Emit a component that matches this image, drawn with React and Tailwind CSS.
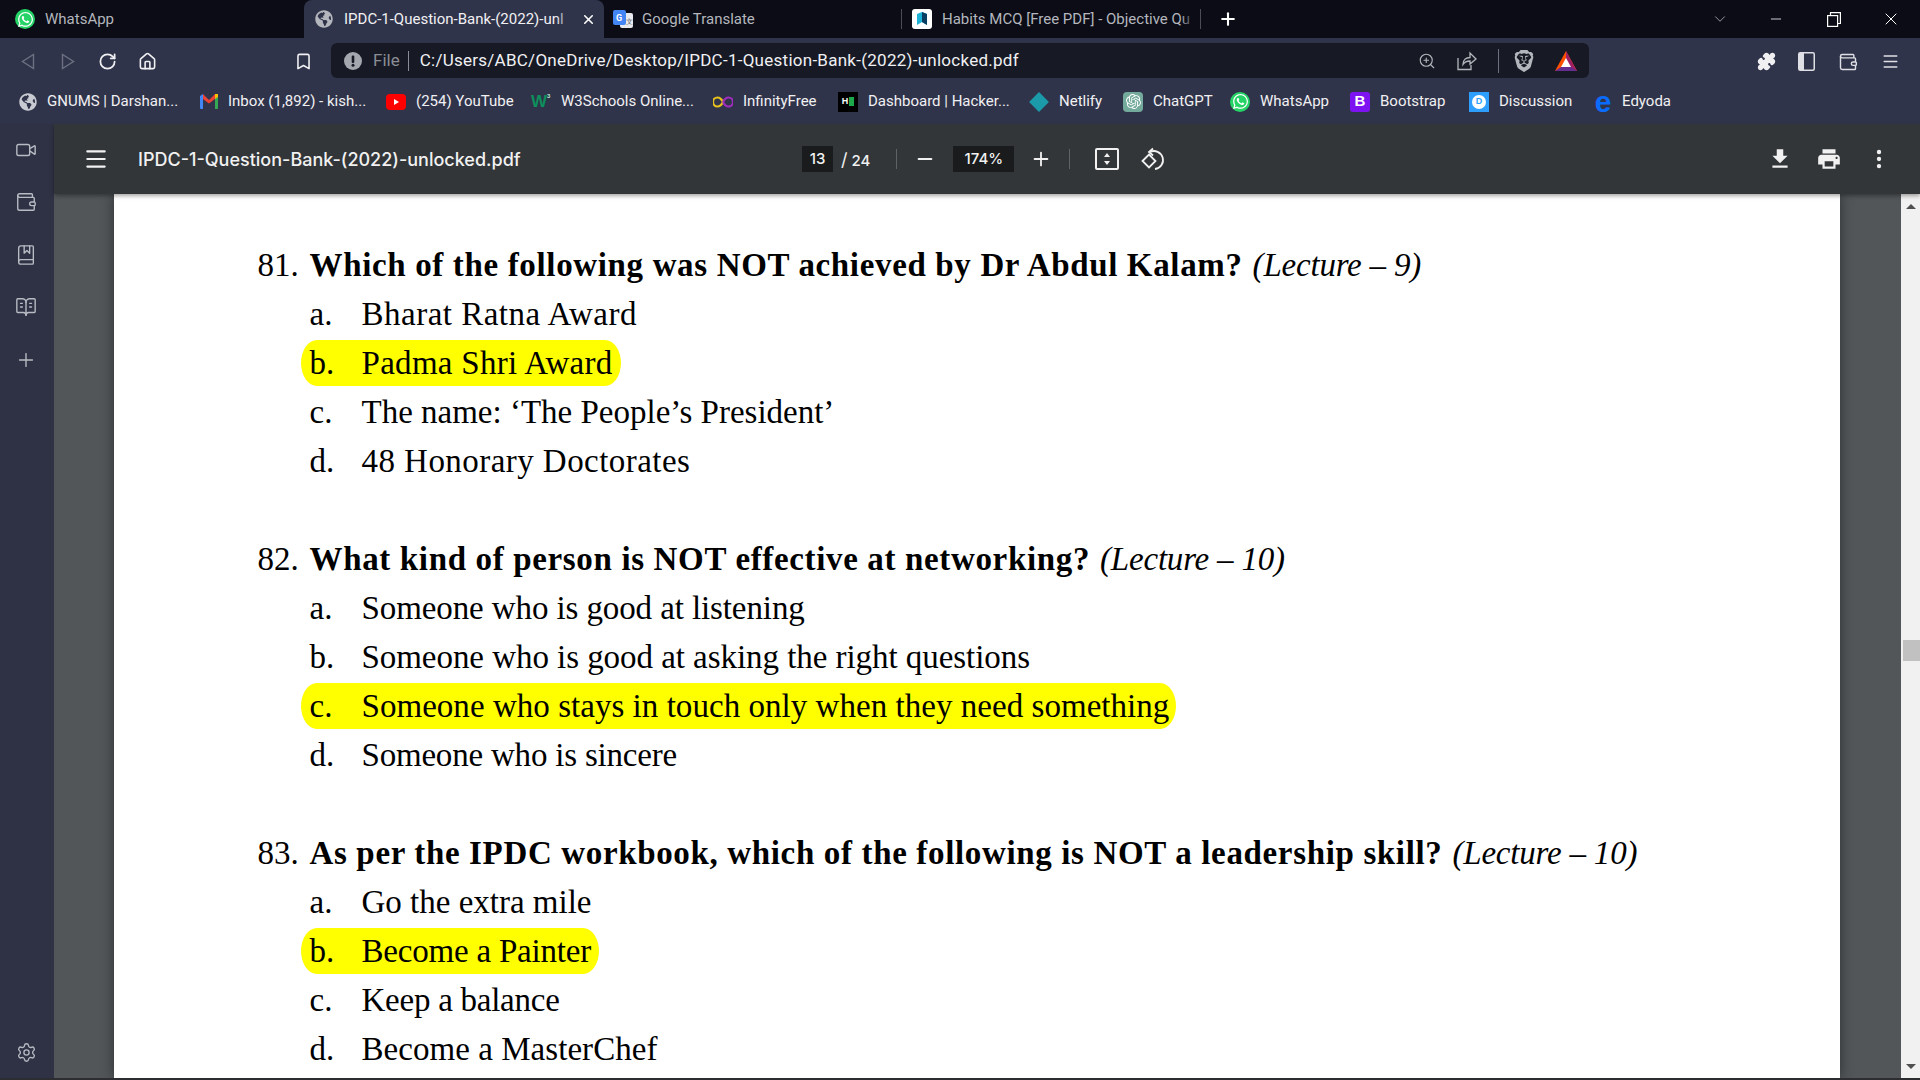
import {
  Bookmark, ChevronDown, Home, Menu, Minus, Plus, Puzzle, RotateCw, Settings, Video, Wallet, X, ZoomIn, BookMarked, BookOpenText,
} from "lucide-react";
import { FaGlobeAmericas, FaWhatsapp } from "react-icons/fa";
import { SiBrave, SiOpenai } from "react-icons/si";

const ui = "font-['Roboto',sans-serif]";

const WhatsAppIcon = ({ size = 20 }) => (
  <span className="flex shrink-0 items-center justify-center rounded-full bg-[#25d366] text-white" style={{ width: size, height: size }}>
    <FaWhatsapp size={size - 3} />
  </span>
);

const Translate = () => (
  <svg width="20" height="20" viewBox="0 0 20 20" className="shrink-0">
    <rect x="7" y="4" width="13" height="15" rx="2" fill="#e8eaed" />
    <rect x="0" y="1" width="13" height="15" rx="2" fill="#4285f4" />
    <text x="3" y="12" fontSize="9" fill="#fff" fontFamily="Roboto" fontWeight="700">G</text>
    <text x="13" y="15" fontSize="7" fill="#5f6368" fontFamily="Roboto">文</text>
  </svg>
);

const Testbook = () => (
  <svg width="20" height="20" viewBox="0 0 20 20" className="shrink-0">
    <rect width="20" height="20" rx="3" fill="#fff" />
    <path d="M5 5 L10 3 L15 5 V16 L10 13 L5 16 Z" fill="#1eb2d6" />
    <path d="M10 3 L15 5 V16 L10 13 Z" fill="#0a3d62" />
  </svg>
);

const Gmail = () => (
  <svg width="18" height="17" viewBox="0 0 18 17" className="shrink-0">
    <path d="M0 3 L3 1 V16 H1 Q0 16 0 15 Z" fill="#4285f4" />
    <path d="M18 3 L15 1 V16 H17 Q18 16 18 15 Z" fill="#34a853" />
    <path d="M3 1 L9 7 L15 1 V6 L9 10.5 L3 6 Z" fill="#ea4335" />
    <path d="M15 1 L18 1 V4 L15 6 Z" fill="#fbbc04" />
  </svg>
);

const YouTube = () => (
  <svg width="20" height="16" viewBox="0 0 20 16" className="shrink-0">
    <rect width="20" height="16" rx="4" fill="#ff0000" />
    <path d="M8 5 L13 8 L8 11 Z" fill="#fff" />
  </svg>
);

const W3 = () => (
  <span className="flex w-5 shrink-0 items-start font-['Liberation_Sans',sans-serif] text-[17px] leading-none font-bold text-[#0c8f5c]">
    W<span className="text-[6px] text-[#bfe8d6]">3</span>
  </span>
);

const InfinityIcon = () => (
  <svg width="20" height="12" viewBox="0 0 20 12" fill="none" strokeWidth="2.2" className="shrink-0">
    <path d="M10 6 C8 2 6 1.500 4.500 1.500 A4.500 4.500 0 0 0 4.500 10.500 C6 10.500 8 10 10 6" stroke="#e8c21c" />
    <path d="M10 6 C12 2 14 1.500 15.500 1.500 A4.500 4.500 0 0 1 15.500 10.500 C14 10.500 12 10 10 6" stroke="#a02cc0" />
  </svg>
);

const HackerRank = () => (
  <span className="flex h-5 w-5 shrink-0 items-center justify-center gap-[1px] bg-black">
    <span className="font-['Liberation_Sans',sans-serif] text-[9px] font-bold text-white">H</span>
    <span className="h-[9px] w-[5px] bg-[#1ba94c]" />
  </span>
);

const Netlify = () => (
  <span className="flex h-5 w-5 shrink-0 items-center justify-center">
    <span className="h-[14px] w-[14px] rotate-45 bg-[#1b9aaa]" />
  </span>
);

const ChatGpt = () => (
  <span className="flex h-5 w-5 shrink-0 items-center justify-center rounded-[4px] bg-[#74aa9c] text-white">
    <SiOpenai size={15} />
  </span>
);

const BootstrapIcon = () => (
  <span className="flex h-5 w-5 shrink-0 items-center justify-center rounded-[3px] bg-[#7e13f2] font-['Liberation_Sans',sans-serif] text-[15px] font-bold text-white">
    B
  </span>
);

const Disqus = () => (
  <span className="flex h-5 w-5 shrink-0 items-center justify-center bg-[#2e9fff]">
    <span className="flex h-[14px] w-[14px] items-center justify-center rounded-full bg-white font-['Liberation_Sans',sans-serif] text-[9px] font-bold text-[#2e9fff]">D</span>
  </span>
);

const Edyoda = () => (
  <span className="w-[18px] shrink-0 text-center font-['Liberation_Sans',sans-serif] text-[30px] leading-[18px] font-bold text-[#0a6cff]">e</span>
);

const Bat = () => (
  <svg width="22" height="20" viewBox="0 0 22 20">
    <path d="M11 0 L22 20 H0 Z" fill="#ff5000" />
    <path d="M11 0 L22 20 H15 L11 12 Z" fill="#9e1f63" />
    <path d="M0 20 L6 16 H16 L22 20 Z" fill="#662d91" />
    <path d="M11 7 L16 16 H6 Z" fill="#fff" />
  </svg>
);

const NavTriangle = ({ flip }) => (
  <svg width="14" height="17" viewBox="0 0 14 17" fill="none" stroke="#6d7080" strokeWidth="1.4" className={flip ? "-scale-x-100" : ""}>
    <path d="M12.500 1.500 V15.500 L1.500 8.500 Z" />
  </svg>
);

const InfoFilled = () => (
  <svg width="18" height="18" viewBox="0 0 18 18" className="ml-[13px] shrink-0">
    <circle cx="9" cy="9" r="9" fill="#a5a7af" />
    <rect x="7.700" y="3.500" width="2.600" height="7.500" rx="1" fill="#171a24" />
    <circle cx="9" cy="13.300" r="1.500" fill="#171a24" />
  </svg>
);

const ShareOut = () => (
  <svg width="20" height="20" viewBox="0 0 20 20" fill="none" stroke="#b4b6bd" strokeWidth="1.300" className="ml-[21px] shrink-0">
    <path d="M1 7 V18.500 H14 V14" />
    <path d="M6 13.500 C6 9 9 6.500 13 6.500 V2 L19 8 L13 13 V10 C10 10 7.500 11 6 13.500 Z" />
  </svg>
);

const RestoreIcon = () => (
  <svg width="14" height="15" viewBox="0 0 14 15" fill="none" stroke="#fff" strokeWidth="1.200" className="ml-[43px] shrink-0">
    <rect x="0.600" y="3.600" width="10" height="10.800" />
    <path d="M3.500 3.500 V0.600 H13.400 V11.500 H10.500" />
  </svg>
);

const SidePanelIcon = () => (
  <svg width="17" height="19" viewBox="0 0 17 19" className="ml-[22px] shrink-0">
    <rect x="0.750" y="0.750" width="15.500" height="17.500" rx="1.500" fill="none" stroke="#dfe0e5" strokeWidth="1.500" />
    <rect x="1" y="1" width="5" height="17" fill="#dfe0e5" />
  </svg>
);

const bookmarks = [
  { label: "GNUMS | Darshan...", w: "w-[181px]", icon: <FaGlobeAmericas size={18} className="shrink-0 text-[#c9cbd3]" /> },
  { label: "Inbox (1,892) - kish...", w: "w-[186px]", icon: <Gmail /> },
  { label: "(254) YouTube", w: "w-[145px]", icon: <YouTube /> },
  { label: "W3Schools Online...", w: "w-[182px]", icon: <W3 /> },
  { label: "InfinityFree", w: "w-[125px]", icon: <InfinityIcon /> },
  { label: "Dashboard | Hacker...", w: "w-[191px]", icon: <HackerRank /> },
  { label: "Netlify", w: "w-[94px]", icon: <Netlify /> },
  { label: "ChatGPT", w: "w-[107px]", icon: <ChatGpt /> },
  { label: "WhatsApp", w: "w-[120px]", icon: <WhatsAppIcon /> },
  { label: "Bootstrap", w: "w-[119px]", icon: <BootstrapIcon /> },
  { label: "Discussion", w: "w-[125px]", icon: <Disqus /> },
  { label: "Edyoda", w: "w-[90px]", icon: <Edyoda /> },
];

const questions = [
  {
    num: "81.",
    title: "Which of the following was NOT achieved by Dr Abdul Kalam?",
    lecture: "(Lecture – 9)",
    options: [
      { l: "a.", t: "Bharat Ratna Award", track: "tracking-[0.5px]" },
      { l: "b.", t: "Padma Shri Award", track: "tracking-[0.3px]", hl: "w-[320px]" },
      { l: "c.", t: "The name: ‘The People’s President’", track: "tracking-normal" },
      { l: "d.", t: "48 Honorary Doctorates", track: "tracking-[0.45px]" },
    ],
  },
  {
    num: "82.",
    title: "What kind of person is NOT effective at networking?",
    lecture: "(Lecture – 10)",
    options: [
      { l: "a.", t: "Someone who is good at listening", track: "tracking-[-0.1px]" },
      { l: "b.", t: "Someone who is good at asking the right questions", track: "tracking-[-0.05px]" },
      { l: "c.", t: "Someone who stays in touch only when they need something", track: "tracking-[0.04px]", hl: "w-[875px]" },
      { l: "d.", t: "Someone who is sincere", track: "tracking-[-0.2px]" },
    ],
  },
  {
    num: "83.",
    title: "As per the IPDC workbook, which of the following is NOT a leadership skill?",
    lecture: "(Lecture – 10)",
    options: [
      { l: "a.", t: "Go the extra mile", track: "tracking-normal" },
      { l: "b.", t: "Become a Painter", track: "tracking-[-0.2px]", hl: "w-[298px]" },
      { l: "c.", t: "Keep a balance", track: "tracking-[-0.25px]" },
      { l: "d.", t: "Become a MasterChef", track: "tracking-[0.05px]" },
    ],
  },
];

const FadedTitle = ({ text, width, className, from }) => (
  <span className={`relative overflow-hidden whitespace-nowrap ${width} ${className}`}>
    {text}
    <span className={`absolute top-0 right-0 h-full w-[16px] bg-gradient-to-r from-transparent ${from}`} />
  </span>
);

const TabStrip = () => (
  <div className={`flex h-[38px] items-stretch bg-[#0b0c15] text-[15px] ${ui}`}>
    <div className="flex w-[304px] items-center gap-[10px] pl-[15px] text-[#b4b6bd]">
      <WhatsAppIcon />
      WhatsApp
    </div>
    <div className="flex w-[300px] items-center rounded-t-[8px] bg-[#30344a] pl-[11px] text-[#f0f0f3]">
      <FaGlobeAmericas size={18} className="shrink-0 text-[#b4b6bd]" />
      <FadedTitle text="IPDC-1-Question-Bank-(2022)-unl" width="w-[228px]" className="ml-[11px]" from="to-[#30344a]" />
      <X size={15} strokeWidth={2.5} className="ml-[9px] text-white" />
    </div>
    <div className="flex w-[297px] items-center gap-[9px] pl-[9px] text-[#b4b6bd]">
      <Translate />
      Google Translate
    </div>
    <div className="my-[9px] w-px bg-[#4a4c58]" />
    <div className="flex w-[298px] items-center gap-[10px] pl-[10px] text-[#b4b6bd]">
      <Testbook />
      <FadedTitle text="Habits MCQ [Free PDF] - Objective Qu" width="w-[254px]" from="to-[#0b0c15]" />
    </div>
    <div className="my-[9px] w-px bg-[#4a4c58]" />
    <div className="flex flex-1 items-center text-white">
      <Plus size={20} strokeWidth={2.5} className="ml-[17px]" />
      <ChevronDown size={18} strokeWidth={1} className="ml-[473px] text-[#c4c5cb]" />
      <Minus size={16} strokeWidth={1.2} className="ml-[39px]" />
      <RestoreIcon />
      <X size={20} strokeWidth={1.2} className="ml-[40px]" />
    </div>
  </div>
);

const AddressBar = () => (
  <div className={`flex h-[47px] items-center bg-[#30344a] ${ui}`}>
    <span className="ml-[21px]"><NavTriangle /></span>
    <span className="ml-[26px]"><NavTriangle flip /></span>
    <RotateCw size={19} strokeWidth={2.2} className="ml-[23px] text-[#f0f0f3]" />
    <Home size={19} strokeWidth={2} className="ml-[21px] text-[#f0f0f3]" />
    <Bookmark size={19} strokeWidth={2} className="ml-[137px] text-[#f0f0f3]" />
    <div className="mb-[2px] ml-[18px] flex h-[35px] w-[1258px] items-center rounded-[6px] bg-[#171a24] text-[17px]">
      <InfoFilled />
      <span className="ml-[11px] text-[#8b8d96]">File</span>
      <span className="ml-[8px] h-[20px] w-px bg-[#8b8d96]" />
      <span className="ml-[11px] w-[998px] tracking-[0.26px] whitespace-nowrap text-[#f0f0f3]">C:/Users/ABC/OneDrive/Desktop/IPDC-1-Question-Bank-(2022)-unlocked.pdf</span>
      <ZoomIn size={18} strokeWidth={1.5} className="text-[#b4b6bd]" />
      <ShareOut />
      <span className="ml-[21px] h-[24px] w-px bg-[#6d7080]" />
      <SiBrave size={22} className="ml-[14px] text-[#b4b6bd]" />
      <span className="ml-[20px]"><Bat /></span>
    </div>
    <Puzzle size={19} fill="#f0f0f3" stroke="#f0f0f3" className="ml-[168px]" />
    <SidePanelIcon />
    <Wallet size={20} strokeWidth={1.7} className="ml-[23px] text-[#dfe0e5]" />
    <Menu size={19} strokeWidth={1.7} className="ml-[23px] text-[#dfe0e5]" />
  </div>
);

const BookmarksBar = () => (
  <div className={`flex h-[39px] items-center bg-[#30344a] pb-[6px] pl-[19px] text-[15px] text-[#f0f0f3] ${ui}`}>
    {bookmarks.map((b) => (
      <div key={b.label} className={`flex shrink-0 items-center gap-[10px] whitespace-nowrap ${b.w}`}>
        {b.icon}
        {b.label}
      </div>
    ))}
  </div>
);

const Sidebar = () => (
  <div className="flex w-[54px] shrink-0 flex-col items-center bg-[#2e3244] pt-[15px] pr-[2px] text-[#b9bbc4]">
    <Video size={22} strokeWidth={1.5} />
    <Wallet size={22} strokeWidth={1.5} className="mt-[30px]" />
    <BookMarked size={22} strokeWidth={1.5} className="mt-[31px]" />
    <BookOpenText size={22} strokeWidth={1.5} className="mt-[30px]" />
    <Plus size={22} strokeWidth={1.5} className="mt-[31px]" />
    <Settings size={21} strokeWidth={1.5} className="mt-auto mb-[15px]" />
  </div>
);

const PdfToolbar = () => (
  <div className="relative z-10 flex h-[70px] items-center bg-[#323639] text-[#f1f1f1] shadow-[0_2px_4px_rgba(0,0,0,0.35)]">
    <Menu size={26} strokeWidth={2} className="ml-[29px] shrink-0" />
    <span className="ml-[29px] w-[664px] font-['Inter',sans-serif] text-[18px] font-medium whitespace-nowrap">IPDC-1-Question-Bank-(2022)-unlocked.pdf</span>
    <div className="flex items-center font-['Inter',sans-serif] text-[15px] font-medium">
      <span className="flex h-[26px] w-[31px] items-center justify-center bg-[#191b1c]">13</span>
      <span className="ml-[8px]"><span className="text-[18px] font-normal">/</span> 24</span>
      <span className="ml-[26px] h-[20px] w-px bg-[#5f6368]" />
      <Minus size={22} className="ml-[17px]" />
      <span className="ml-[17px] flex h-[26px] w-[61px] items-center justify-center bg-[#191b1c]">174%</span>
      <Plus size={22} className="ml-[16px]" />
      <span className="ml-[17px] h-[20px] w-px bg-[#5f6368]" />
      <svg width="24" height="22" viewBox="0 0 24 22" fill="none" stroke="#f1f1f1" strokeWidth="2" className="ml-[25px]">
        <rect x="1" y="1" width="22" height="20" rx="1" />
        <path d="M12 5 L15 9 H9 Z M12 17 L15 13 H9 Z" fill="#f1f1f1" stroke="none" />
      </svg>
      <svg width="24" height="24" viewBox="0 0 24 24" fill="none" stroke="#f1f1f1" strokeWidth="1.800" className="ml-[22px]">
        <path d="M1.500 14 L8 7.500 L14.500 14 L8 20.500 Z" />
        <path d="M9 5 A9 9 0 1 1 14 22" />
        <path d="M12 1.500 L8 5 L12 8.500" />
      </svg>
    </div>
    <svg width="26" height="26" viewBox="0 0 24 24" fill="#f1f1f1" className="ml-auto">
      <path d="M19 9h-4V3H9v6H5l7 7 7-7zM5 18v2h14v-2H5z" />
    </svg>
    <svg width="26" height="26" viewBox="0 0 24 24" fill="#f1f1f1" className="ml-[23px]">
      <path d="M19 8H5c-1.660 0-3 1.340-3 3v6h4v4h12v-4h4v-6c0-1.660-1.340-3-3-3zm-3 11H8v-5h8v5zm3-7c-.55 0-1-.45-1-1s.45-1 1-1 1 .45 1 1-.45 1-1 1zm-1-9H6v4h12V3z" />
    </svg>
    <svg width="26" height="26" viewBox="0 0 24 24" fill="#f1f1f1" className="mr-[28px] ml-[24px]">
      <circle cx="12" cy="5.500" r="2" />
      <circle cx="12" cy="12" r="2" />
      <circle cx="12" cy="18.500" r="2" />
    </svg>
  </div>
);

const Scrollbar = () => (
  <div className="flex w-[19px] shrink-0 flex-col bg-[#f1f1f1]">
    <div className="flex h-[24px] items-center justify-center">
      <span className="h-0 w-0 border-x-[5px] border-b-[5px] border-x-transparent border-b-[#505050]" />
    </div>
    <div className="mt-[422px] ml-[2px] h-[21px] bg-[#c1c1c1]" />
    <div className="mt-auto flex h-[24px] items-center justify-center">
      <span className="h-0 w-0 border-x-[5px] border-t-[5px] border-x-transparent border-t-[#505050]" />
    </div>
  </div>
);

const Question = ({ q }) => (
  <div className="mb-[49px]">
    <div className="flex h-[49px] items-center whitespace-nowrap">
      <span className="w-[52px]">{q.num}</span>
      <b className="tracking-[0.65px]">{q.title}</b>
      <i className="ml-[10px] tracking-[-0.2px]">{q.lecture}</i>
    </div>
    <div className="pl-[52px]">
      {q.options.map((o) =>
        o.hl ? (
          <div key={o.l} className={`-ml-[9px] mt-[0.5px] mb-[2.5px] flex h-[46px] items-center rounded-[16px/23px] bg-[#ffff00] pt-[2px] pl-[9px] whitespace-nowrap ${o.hl}`}>
            <span className="w-[52px]">{o.l}</span>
            <span className={o.track}>{o.t}</span>
          </div>
        ) : (
          <div key={o.l} className="flex h-[49px] items-center whitespace-nowrap">
            <span className="w-[52px]">{o.l}</span>
            <span className={o.track}>{o.t}</span>
          </div>
        )
      )}
    </div>
  </div>
);

const App = () => (
  <div className="flex h-[1080px] w-[1920px] flex-col overflow-hidden bg-[#2b2d30]">
    <TabStrip />
    <AddressBar />
    <BookmarksBar />
    <div className="flex h-[954px]">
      <Sidebar />
      <div className="flex min-w-0 flex-1 flex-col">
        <PdfToolbar />
        <div className="flex min-h-0 flex-1">
          <div className="flex flex-1 justify-center overflow-hidden bg-[#525659] pr-[2px]">
            <div className="h-full w-[1726px] bg-white pt-[47px] pl-[144px] font-['Liberation_Serif',serif] text-[33px] text-black shadow-[0_0_12px_rgba(0,0,0,0.45)]">
              {questions.map((q) => (
                <Question key={q.num} q={q} />
              ))}
            </div>
          </div>
          <Scrollbar />
        </div>
      </div>
    </div>
    <div className="h-[2px]" />
  </div>
);

export default App;
